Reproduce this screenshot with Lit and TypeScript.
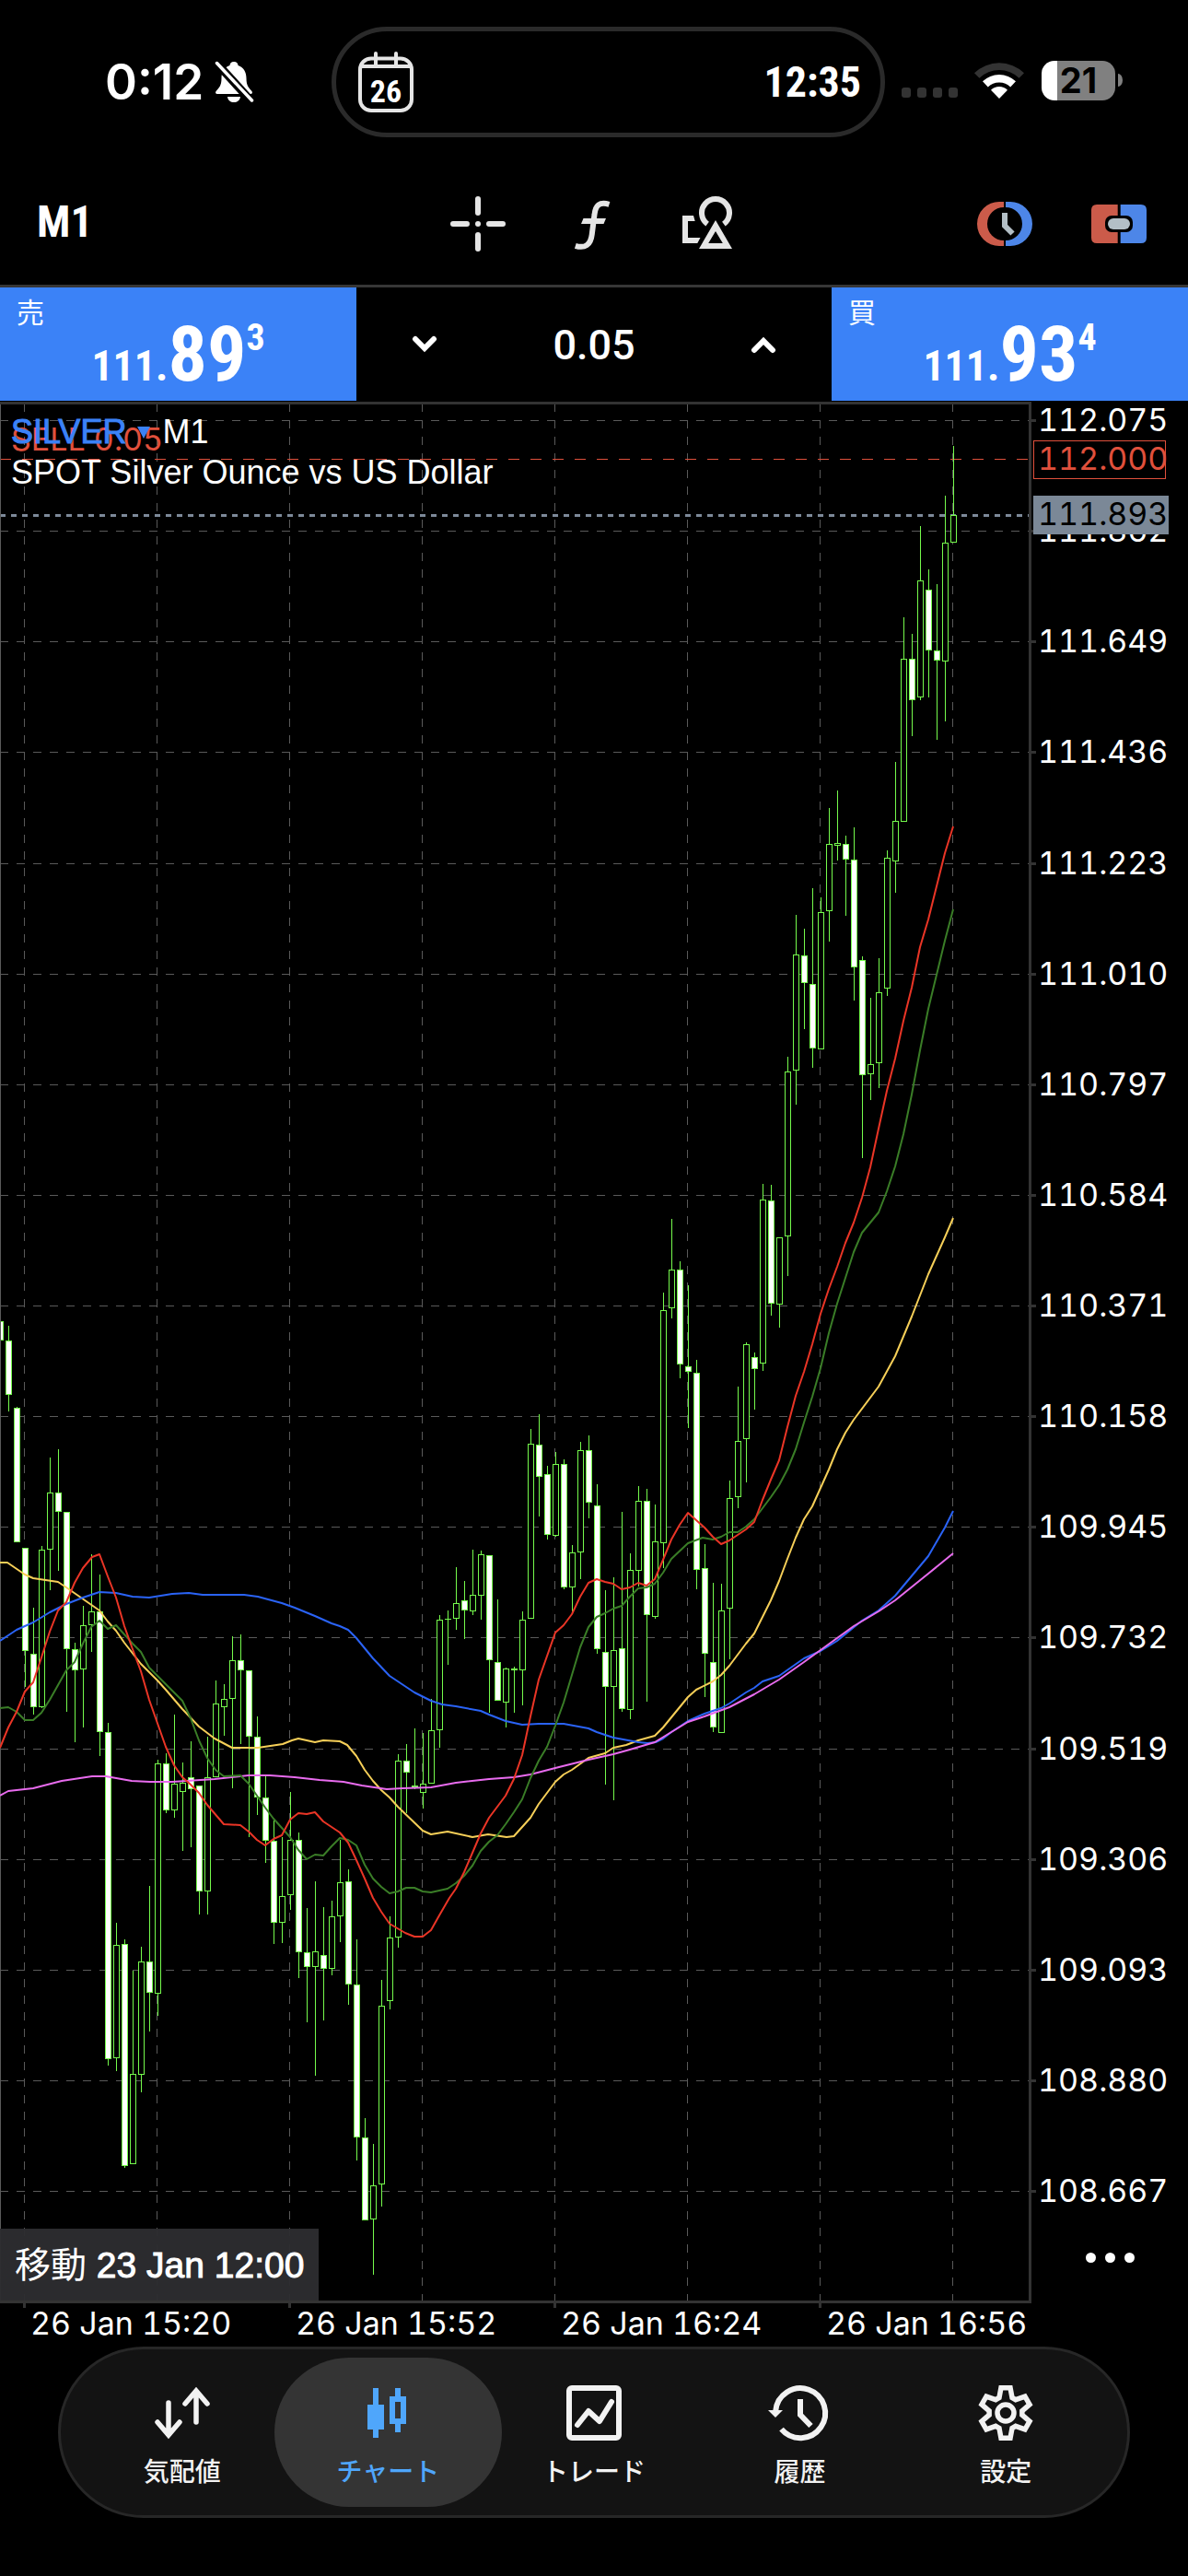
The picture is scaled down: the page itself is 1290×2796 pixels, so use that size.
import { LitElement, html, svg, css } from "lit";
import { customElement, property, state } from "lit/decorators.js";
import { classMap } from "lit/directives/class-map.js";

/* One row per minute: high, body top, body bottom, low, 1 for a falling candle. */
const CANDLES: number[][] = [
  [1434, 1434, 1455, 1455, 1], [1439, 1455, 1514, 1532, 1], [1527, 1528, 1674, 1674, 1], [1680, 1680, 1792, 1831, 1],
  [1745, 1795, 1853, 1861, 1], [1678, 1682, 1853, 1854, 0], [1582, 1620, 1682, 1726, 0], [1573, 1620, 1641, 1705, 1],
  [1641, 1641, 1790, 1858, 1], [1783, 1790, 1813, 1891, 1], [1743, 1764, 1812, 1875, 0], [1687, 1749, 1764, 1793, 0],
  [1709, 1749, 1880, 1906, 1], [1870, 1880, 2235, 2242, 1], [2087, 2111, 2234, 2248, 0], [2105, 2110, 2351, 2353, 1],
  [2139, 2251, 2349, 2349, 0], [2113, 2129, 2252, 2271, 0], [2047, 2129, 2163, 2205, 1], [1910, 1914, 2164, 2188, 0],
  [1903, 1914, 1965, 1968, 1], [1861, 1936, 1965, 1973, 0], [1913, 1935, 1945, 2009, 0], [1890, 1929, 1942, 2005, 1],
  [1938, 1938, 2053, 2078, 1], [1885, 1929, 2053, 2078, 0], [1824, 1849, 1929, 1929, 0], [1828, 1844, 1853, 1884, 0],
  [1776, 1802, 1844, 1941, 0], [1774, 1802, 1813, 1893, 1], [1813, 1813, 1885, 1994, 1], [1863, 1885, 1951, 1970, 1],
  [1928, 1951, 1998, 2022, 1], [1976, 1998, 2087, 2110, 1], [1994, 2058, 2087, 2109, 0], [1945, 1997, 2057, 2073, 0],
  [1989, 1997, 2119, 2147, 1], [2071, 2119, 2135, 2195, 1], [2042, 2118, 2135, 2253, 0], [2070, 2122, 2137, 2193, 1],
  [2063, 2080, 2137, 2144, 0], [1997, 2043, 2080, 2108, 0], [2029, 2042, 2154, 2176, 1], [2105, 2154, 2320, 2345, 1],
  [2299, 2320, 2410, 2410, 1], [2327, 2372, 2409, 2469, 0], [2149, 2177, 2371, 2395, 0], [2080, 2103, 2172, 2181, 0],
  [1904, 1911, 2103, 2114, 0], [1893, 1911, 1924, 1968, 1], [1876, 1938, 1940, 1942, 1], [1881, 1936, 1946, 1963, 0],
  [1844, 1878, 1936, 1936, 0], [1753, 1758, 1878, 1897, 0], [1748, 1757, 1758, 1807, 0], [1701, 1740, 1757, 1769, 0],
  [1716, 1737, 1748, 1779, 1], [1682, 1731, 1749, 1753, 0], [1683, 1687, 1732, 1758, 0], [1688, 1688, 1802, 1859, 1],
  [1736, 1804, 1846, 1846, 1], [1810, 1811, 1848, 1875, 0], [1809, 1811, 1813, 1859, 0], [1749, 1758, 1813, 1851, 0],
  [1551, 1567, 1757, 1757, 0], [1535, 1568, 1603, 1646, 1], [1591, 1600, 1666, 1671, 1], [1576, 1589, 1667, 1668, 0],
  [1584, 1589, 1723, 1725, 1], [1677, 1685, 1723, 1749, 0], [1565, 1574, 1685, 1714, 0], [1558, 1574, 1631, 1648, 1],
  [1611, 1634, 1790, 1795, 1], [1726, 1793, 1831, 1937, 1], [1712, 1791, 1831, 1954, 0], [1641, 1789, 1855, 1858, 1],
  [1686, 1704, 1856, 1866, 0], [1613, 1629, 1705, 1722, 0], [1616, 1629, 1753, 1847, 1], [1633, 1673, 1755, 1757, 0],
  [1403, 1422, 1675, 1702, 0], [1323, 1378, 1420, 1431, 0], [1369, 1378, 1481, 1496, 1], [1395, 1483, 1489, 1550, 1],
  [1476, 1490, 1704, 1725, 1], [1676, 1702, 1795, 1842, 1], [1718, 1804, 1875, 1880, 1], [1719, 1748, 1881, 1881, 0],
  [1607, 1626, 1746, 1801, 0], [1505, 1564, 1625, 1637, 0], [1457, 1459, 1562, 1609, 0], [1468, 1473, 1486, 1530, 1],
  [1285, 1302, 1480, 1488, 0], [1286, 1303, 1415, 1428, 1], [1343, 1343, 1416, 1441, 0], [1147, 1163, 1342, 1385, 0],
  [993, 1036, 1162, 1199, 0], [1008, 1037, 1067, 1117, 1], [964, 1068, 1138, 1159, 1], [974, 990, 1139, 1139, 0],
  [877, 916, 989, 1022, 0], [858, 915, 918, 934, 0], [907, 916, 933, 994, 1], [898, 933, 1050, 1086, 1],
  [1038, 1042, 1167, 1257, 1], [1083, 1155, 1166, 1194, 0], [1040, 1077, 1154, 1181, 0], [923, 931, 1073, 1081, 0],
  [827, 891, 935, 969, 0], [670, 715, 892, 892, 0], [688, 715, 760, 799, 1], [571, 630, 757, 760, 0],
  [618, 640, 706, 757, 1], [634, 706, 717, 803, 1], [538, 589, 718, 783, 0], [484, 559, 589, 589, 0],
];

/* Moving averages, drawn from the slowest colour group to the fastest. */
const AVERAGES: { color: string; points: string }[] = [
  {
    color: "#f6cf58",
    points:
      "0,1696 8,1696 27,1709 36,1713 63,1717 72,1723 108,1748 117,1760 126,1770 135,1783 153,1806 171,1824 180,1834 198,1855 216,1874 233,1887 252,1897 280,1897 307,1893 317,1889 324,1887 342,1891 351,1889 369,1890 377,1894 387,1906 396,1921 405,1933 414,1943 423,1951 432,1961 459,1987 468,1991 486,1988 513,1994 530,1991 550,1994 558,1993 576,1973 585,1958 603,1934 612,1926 621,1921 639,1908 657,1903 666,1897 680,1894 693,1889 711,1884 720,1875 729,1864 747,1842 756,1834 774,1825 783,1818 792,1808 810,1784 819,1773 828,1755 837,1737 846,1716 855,1692 864,1669 873,1649 882,1635 891,1615 900,1595 909,1573 918,1555 927,1541 954,1505 972,1472 990,1429 1008,1383 1026,1343 1035,1322",
  },
  {
    color: "#2a63f6",
    points:
      "0,1781 9,1775 18,1769 36,1761 54,1750 72,1741 90,1734 108,1728 126,1729 144,1733 162,1734 187,1730 205,1729 220,1731 265,1731 280,1733 306,1740 320,1745 342,1754 360,1762 369,1765 378,1769 387,1778 396,1789 405,1800 423,1819 432,1825 450,1837 468,1846 480,1850 495,1852 522,1857 531,1861 549,1868 567,1872 585,1871 612,1871 639,1876 648,1880 666,1886 693,1891 703,1892 712,1891 720,1887 729,1880 747,1868 765,1860 783,1854 792,1849 810,1837 819,1832 828,1825 846,1819 873,1800 882,1796 891,1792 909,1781 936,1759 954,1748 972,1732 1008,1689 1026,1658 1035,1640",
  },
  {
    color: "#e86bee",
    points:
      "0,1949 9,1944 36,1941 67,1933 100,1928 115,1928 143,1933 163,1934 187,1934 233,1931 270,1927 293,1927 320,1929 347,1932 373,1934 393,1938 420,1942 437,1941 468,1940 495,1935 531,1931 558,1929 576,1926 603,1919 639,1910 666,1904 684,1899 711,1891 729,1880 747,1869 765,1863 792,1853 819,1839 846,1823 873,1804 891,1791 927,1765 954,1749 972,1737 1008,1708 1035,1686",
  },
  {
    color: "#3a7d27",
    points:
      "0,1854 9,1853 18,1858 27,1867 36,1867 45,1859 54,1845 63,1829 72,1813 81,1804 90,1784 99,1766 108,1759 117,1768 126,1764 135,1774 144,1784 153,1793 162,1810 171,1819 198,1846 207,1865 216,1889 225,1908 234,1921 243,1928 261,1927 270,1936 279,1949 288,1962 297,1974 306,1984 315,1994 324,2008 333,2018 342,2013 351,2014 360,2004 369,1995 378,1997 387,2003 396,2024 405,2039 414,2048 423,2055 432,2053 441,2049 450,2049 459,2053 468,2054 486,2050 495,2044 504,2036 513,2025 522,2009 531,1999 540,1992 549,1980 558,1967 567,1953 576,1930 585,1911 594,1896 603,1873 612,1848 621,1818 630,1788 639,1766 648,1755 657,1751 666,1746 675,1743 684,1733 693,1724 702,1723 711,1719 720,1707 729,1692 747,1675 763,1669 774,1671 783,1668 792,1663 801,1663 810,1657 819,1649 828,1637 837,1625 846,1612 855,1595 864,1573 873,1544 882,1516 891,1485 900,1447 909,1415 918,1387 927,1359 936,1338 954,1316 963,1293 972,1266 981,1231 990,1188 999,1140 1008,1095 1017,1058 1026,1021 1035,987",
  },
  {
    color: "#ea3526",
    points:
      "0,1897 9,1875 18,1858 27,1836 36,1826 45,1799 54,1771 63,1748 72,1739 81,1718 90,1702 100,1690 108,1687 117,1711 126,1734 135,1765 144,1790 153,1814 162,1845 180,1896 189,1916 198,1929 207,1937 216,1946 225,1959 243,1980 261,1981 270,1988 279,1997 288,2003 297,1996 306,1992 315,1975 324,1968 333,1969 342,1967 351,1977 369,1989 378,2000 387,2019 396,2039 405,2060 414,2075 423,2088 440,2098 450,2102 459,2102 468,2095 477,2079 488,2060 495,2050 504,2032 513,2011 522,1990 531,1973 549,1949 558,1931 567,1905 576,1863 585,1823 603,1772 612,1764 621,1752 630,1733 639,1718 648,1714 657,1717 666,1719 675,1725 684,1723 693,1718 702,1721 711,1714 720,1693 729,1671 738,1655 747,1642 756,1650 765,1658 774,1668 783,1676 792,1672 810,1660 819,1652 828,1628 837,1606 846,1585 855,1549 864,1515 873,1489 882,1459 891,1426 900,1399 909,1375 918,1349 927,1327 936,1300 945,1267 954,1225 963,1184 972,1149 981,1108 990,1072 999,1028 1008,998 1017,962 1026,926 1035,897",
  },
];

const PRICES = Array.from({ length: 17 }, (_, k) => ({
  label: (112.075 - 0.213 * k).toFixed(3),
  y: 456 + Math.round(120.125 * k),
}));
const COLUMNS = Array.from({ length: 8 }, (_, k) => 26 + 144 * k);
const TIMES = ["26 Jan 15:20", "26 Jan 15:52", "26 Jan 16:24", "26 Jan 16:56"];

const gearPath = (): string => {
  const pts: string[] = [];
  for (let t = 0; t < 6; t++) {
    for (const [r, d] of [[18, -23], [27.6, -10.5], [27.6, 10.5], [18, 23]]) {
      const a = ((t * 60 + d - 90) * Math.PI) / 180;
      pts.push(`${(30 + r * Math.cos(a)).toFixed(2)} ${(30 + r * Math.sin(a)).toFixed(2)}`);
    }
  }
  return `M${pts.join("L")}Z`;
};

@customElement("status-bar")
class StatusBar extends LitElement {
  static styles = css`
    :host { display: grid; grid-template-columns: 360fr 601px 329fr; padding-top: 29px; height: 149px; color: #fff; }
    svg { display: block; overflow: visible; }
    .left { display: flex; align-items: center; gap: 12px; padding-left: 114px; height: 120px; }
    .time { font: 600 53px/60px Inter, sans-serif; }
    .island {
      display: flex; align-items: center; justify-content: space-between; box-sizing: border-box; height: 120px;
      padding: 0 21px 0 24px; border: 5px solid #2a2a2a; border-radius: 60px;
    }
    .timer { font: 700 46px/60px "Liberation Sans Narrow", "Roboto Condensed", "DejaVu Sans Condensed", sans-serif; }
    .day { font: 700 34px "Liberation Sans Narrow", "Roboto Condensed", "DejaVu Sans Condensed", sans-serif; }
    .right { display: flex; align-items: center; padding-left: 18px; height: 116px; }
    .dots { display: flex; gap: 7px; padding-top: 27px; }
    .dot { width: 10px; height: 11px; border-radius: 3px; background: #333; }
    .wifi { margin-left: 18px; }
    .battery {
      display: flex; align-items: center; justify-content: center; box-sizing: border-box; margin-left: 19px; width: 80px; height: 43px;
      border-radius: 14px; background: linear-gradient(90deg, #fff 17px, #808080 17px); color: #000;
      font: 700 38px/43px Inter, sans-serif;
    }
    .cap { width: 5px; height: 14px; margin-left: 3px; border-radius: 0 5px 5px 0 / 0 7px 7px 0; background: #808080; }
  `;

  render() {
    return html`
      <div class="left">
        <span class="time">0:12</span>
        <svg width="42" height="44" viewBox="0 0 42 44" aria-hidden="true">
          <path fill="#fff" d="M21 0C24 0 25.5 2 25.5 4C32 6 34.500 12 34.500 18C34.500 26 37 28 40 31.500C42 34 40.500 35 38 35H4C1.500 35 0 34 2 31.500C5 28 7.500 26 7.500 18C7.500 12 10 6 16.500 4C16.500 2 18 0 21 0ZM14 38H28C27.500 42 24.500 44 21 44S14.500 42 14 38Z" />
          <path stroke="#000" stroke-width="9" d="M1 0L40 43" />
          <path stroke="#fff" stroke-width="3.500" stroke-linecap="round" d="M2.500 1.500L40.500 42" />
        </svg>
      </div>
      <div class="island">
        <svg width="60" height="66" viewBox="0 0 60 66" aria-hidden="true">
          <g fill="none" stroke="#e5e5e5" stroke-width="4">
            <rect x="2" y="7.500" width="56" height="56.500" rx="12" />
            <path d="M3 16H57" />
            <path stroke-linecap="round" d="M19 2V14M41 2V14" />
          </g>
          <text class="day" x="30" y="55" text-anchor="middle" fill="#fff">26</text>
        </svg>
        <span class="timer">12:35</span>
      </div>
      <div class="right">
        <div class="dots"><i class="dot"></i><i class="dot"></i><i class="dot"></i><i class="dot"></i></div>
        <svg class="wifi" width="54" height="40" viewBox="0 0 54 40" role="img" aria-label="Wi-Fi">
          <path fill="#333" d="M0 12.200A39 39 0 0 1 54 12.200L48.500 17.700A31 31 0 0 0 5.500 17.700Z" />
          <path fill="#fff" d="M9 21.300A26 26 0 0 1 45 21.300L39.200 27.400A17.500 17.500 0 0 0 14.800 27.400Z" />
          <path fill="#fff" d="M18 30.700A13 13 0 0 1 36 30.700L27 40Z" />
        </svg>
        <span class="battery">21</span><span class="cap"></span>
      </div>
    `;
  }
}

@customElement("chart-toolbar")
class ChartToolbar extends LitElement {
  static styles = css`
    :host {
      display: grid; grid-template-columns: 1fr auto 1fr; align-items: center; height: 130px; padding: 0 45px 1px 40px;
      border-bottom: 3px solid #363636;
    }
    button { display: block; margin: 0; padding: 0; border: 0; background: none; color: #e5e5e5; cursor: pointer; }
    svg { display: block; overflow: visible; }
    .frame { justify-self: start; padding-bottom: 4px; color: #fff; font: 700 48px/60px "Liberation Sans Narrow", "Roboto Condensed", "DejaVu Sans Condensed", sans-serif; }
    .group { display: flex; gap: 64px; }
    .end { justify-self: end; }
  `;

  render() {
    return html`
      <button class="frame">M1</button>
      <div class="group">
        <button aria-label="Crosshair">
          <svg width="60" height="60" viewBox="0 0 60 60" stroke="currentColor" stroke-width="6" stroke-linecap="round">
            <path d="M30 3V18M30 42V57M3 30H18M42 30H57M30 30H30.010" />
          </svg>
        </button>
        <button aria-label="Indicators">
          <svg width="60" height="60" viewBox="0 0 60 60" fill="none">
            <path stroke="currentColor" stroke-width="6" d="M48.500 8.800C38 5.500 33.500 10 32.500 20L29.800 41C28.500 53 22 57 11.800 53.800" />
            <path fill="currentColor" d="M20.500 24H45L42.500 30H18Z" />
          </svg>
        </button>
        <button aria-label="Objects">
          <svg width="60" height="60" viewBox="0 0 60 60" fill="none">
            <path stroke="currentColor" stroke-width="6" d="M31.100 30.100A15 15 0 1 1 48.900 30.100" />
            <path fill="currentColor" fill-rule="evenodd" d="M40 26L58 57H22ZM40 38L32.200 51H47.800Z" />
            <path fill="currentColor" d="M4 21H16L17.700 27H10V45H23.500L20.300 51H4Z" />
          </svg>
        </button>
      </div>
      <div class="group end">
        <button aria-label="Pending order">
          <svg width="60" height="60" viewBox="0 0 60 60" fill="none">
            <path fill="#cb5b4a" d="M29 6H24A24 24 0 0 0 24 54H29V48A18 18 0 0 1 29 12Z" />
            <path fill="#4d86e8" d="M31 6H36A24 24 0 0 1 36 54H31V48A18 18 0 0 0 31 12Z" />
            <path stroke="#b3bfc6" stroke-width="6" d="M30 18V32L38.500 40.500" />
          </svg>
        </button>
        <button aria-label="Market order">
          <svg width="60" height="60" viewBox="0 0 60 60">
            <path fill="#cb5b4a" d="M6 9H28.700V51H6Q0 51 0 45V15Q0 9 6 9Z" />
            <path fill="#4d86e8" d="M31.700 9H54Q60 9 60 15V45Q60 51 54 51H31.700Z" />
            <rect x="15" y="21" width="30" height="18" rx="7" />
            <rect x="18" y="24" width="24" height="12" rx="6" fill="#b3bfc6" />
          </svg>
        </button>
      </div>
    `;
  }
}

@customElement("trade-panel")
class TradePanel extends LitElement {
  @state() private lot = 0.05;

  static styles = css`
    :host { display: grid; grid-template-columns: 3fr 4fr 3fr; height: 123px; margin-bottom: 1px; }
    button { margin: 0; padding: 0; border: 0; background: none; color: #fff; cursor: pointer; }
    .deal { display: flex; flex-direction: column; background: #3b82f7; }
    .side { align-self: flex-start; padding: 10px 18px 0; font: 400 30px/30px "Noto Sans CJK JP", sans-serif; }
    .price {
      align-self: center; font: 700 46px/66px "Liberation Sans Narrow", "Roboto Condensed", "DejaVu Sans Condensed", sans-serif;
      white-space: nowrap;
    }
    .big { font-size: 84px; }
    .tick { font-size: 40px; vertical-align: 33px; line-height: 30px; }
    .lot { display: grid; grid-template-columns: 148px 1fr 148px; align-items: stretch; }
    .step { display: grid; place-items: center; }
    input {
      width: 100%; min-width: 0; box-sizing: border-box; border: 0; padding: 3px 0 0; background: none; color: #fff; text-align: center;
      font: 500 45px/60px Roboto, sans-serif; outline: none;
    }
  `;

  private step(by: number) {
    this.lot = Math.max(0.01, Math.round((this.lot + by) * 100) / 100);
  }

  private deal(side: string, base: string, big: string, tick: string) {
    return html`<button class="deal">
      <span class="side">${side}</span>
      <span class="price">${base}<span class="big">${big}</span><span class="tick">${tick}</span></span>
    </button>`;
  }

  render() {
    return html`
      ${this.deal("売", "111.", "89", "3")}
      <div class="lot">
        <button class="step" aria-label="Decrease volume" @click=${() => this.step(-0.01)}>
          <svg width="28" height="20" viewBox="0 0 28 20" fill="none" stroke="#fff" stroke-width="6" stroke-linecap="round"><path d="M4 4L14 14L24 4" /></svg>
        </button>
        <input aria-label="Volume" inputmode="decimal" .value=${this.lot.toFixed(2)} />
        <button class="step" aria-label="Increase volume" @click=${() => this.step(0.01)}>
          <svg width="28" height="20" viewBox="0 0 28 20" fill="none" stroke="#fff" stroke-width="6" stroke-linecap="round"><path d="M4 16L14 6L24 16" /></svg>
        </button>
      </div>
      ${this.deal("買", "111.", "93", "4")}
    `;
  }
}

@customElement("price-chart")
class PriceChart extends LitElement {
  static styles = css`
    :host { display: block; position: relative; }
    .plot { display: block; width: 100%; height: auto; }
    .crisp { shape-rendering: crispEdges; }
    .axis { font: 400 34px Inter, sans-serif; font-variant-numeric: tabular-nums; fill: #fff; }
    .grid { stroke: #5a5a5a; stroke-width: 1; }
    .frame { stroke: #333; stroke-width: 3; fill: none; }
    .order { stroke: #e0503c; fill: none; }
    .axis.ordertext { fill: #e0503c; }
    .bid { stroke: #7d8999; stroke-width: 3; stroke-dasharray: 6 6; }
    .bidbox { fill: #7b8897; }
    .axis.bidtext { fill: #000; }
    .up { stroke: #75fb4c; fill: #000; }
    .down { stroke: #75fb4c; fill: #fff; }
    .average { fill: none; stroke-width: 2; stroke-linejoin: round; }
    button { margin: 0; padding: 0; border: 0; background: none; color: inherit; font: inherit; cursor: pointer; }
    .head { position: absolute; top: 11px; left: 12px; color: #fff; font: 400 36px/44px "Liberation Sans", sans-serif; }
    .title { display: flex; align-items: center; gap: 13px; }
    .symbol { display: flex; align-items: center; gap: 12px; color: #3b82f7; -webkit-text-stroke: 1px #3b82f7; }
    .goto {
      position: absolute; left: 0; bottom: 49px; height: 78px; padding: 2px 16px 0; background: rgba(44, 44, 48, 0.97); color: #fff;
      font: 400 39px/76px "Liberation Sans", "Noto Sans CJK JP", sans-serif; -webkit-text-stroke: 1px #fff;
    }
    .jp { -webkit-text-stroke: 0; }
    .more { position: absolute; right: 48px; bottom: 80px; display: flex; gap: 10px; padding: 10px; }
    .more i { width: 11px; height: 11px; border-radius: 50%; background: #fff; }
  `;

  private candle(row: number[], i: number) {
    const [high, top, bottom, low, falling] = row;
    const x = 9 * i + 0.5;
    const wicks = `M${x} ${high}V${top}M${x} ${bottom}V${low}`;
    const body = bottom - top < 3
      ? svg`<rect x=${x - 3.5} y=${top} width="7" height=${bottom - top} stroke="none" fill="#75fb4c" />`
      : svg`<rect x=${x - 3} y=${top + 0.5} width="6" height=${bottom - top - 1} />`;
    return svg`<g class=${falling ? "down" : "up"}><path d=${wicks} />${body}</g>`;
  }

  render() {
    return html`
      <svg class="plot" viewBox="0 436 1290 2110" role="img" aria-label="SILVER M1">
        <g class="crisp">
          <g class="grid">
            ${PRICES.map((p) => svg`<path stroke-dasharray="9 9" d="M0 ${p.y + 0.5}H1117" />`)}
            ${COLUMNS.map((x) => svg`<path stroke-dasharray="9 9" d="M${x + 0.5} 438V2497" />`)}
          </g>
          <path class="order" stroke-dasharray="12 12" d="M0 498.500H1117" />
          <path class="bid" d="M0 559.500H1117" />
          ${CANDLES.map((row, i) => this.candle(row, i))}
          <path class="grid" d="M0.500 439V2497" />
          <path class="frame" d="M0 437.500H1118.500V2498.500H0" />
          ${PRICES.map((p) => svg`<path class="frame" d="M1120 ${p.y + 0.5}H1125" />`)}
          ${TIMES.map((_, k) => svg`<path class="frame" d="M${26.5 + 288 * k} 2500V2505" />`)}
        </g>
        ${AVERAGES.map((a) => svg`<polyline class="average" stroke=${a.color} points=${a.points} />`)}
        ${PRICES.map((p) => svg`<text class="axis" x="1127" y=${p.y + 12}>${p.label}</text>`)}
        ${TIMES.map((t, k) => svg`<text class="axis" x=${33 + 288 * k} y="2534">${t}</text>`)}
        <rect class="order crisp" x="1122.500" y="478.500" width="143" height="41" />
        <text class="axis ordertext" x="1127" y="510">112.000</text>
        <rect class="bidbox" x="1122" y="538" width="147" height="42" />
        <text class="axis bidtext" x="1127" y="570">111.893</text>
        <text class="axis ordertext" x="12" y="489">SELL 0.05</text>
      </svg>
      <div class="head">
        <div class="title">
          <button class="symbol">SILVER<svg width="14" height="14" viewBox="0 0 14 14"><path fill="#3b82f7" d="M0 1H14L7 14Z" /></svg></button>
          <span>M1</span>
        </div>
        <div>SPOT Silver Ounce vs US Dollar</div>
      </div>
      <button class="goto"><span class="jp">移動</span> 23 Jan 12:00</button>
      <button class="more" aria-label="More"><i></i><i></i><i></i></button>
    `;
  }
}

@customElement("tab-bar")
class TabBar extends LitElement {
  @property() active = "chart";

  static styles = css`
    :host { display: block; padding: 1px 63px 63px; }
    nav {
      display: grid; grid-template-columns: repeat(5, 1fr); box-sizing: border-box; padding: 9px 20px; border: 3px solid #272727;
      border-radius: 93px; background: #131313;
    }
    button {
      display: flex; flex-direction: column; align-items: center; gap: 14px; height: 162px; margin: 0 -12px; padding: 30px 0 0;
      border: 0; border-radius: 81px; background: none; color: #f2f2f2; cursor: pointer;
      font: 500 28px/36px "Noto Sans CJK JP", sans-serif;
    }
    .active { background: #343434; color: #4fa6fb; }
    svg { display: block; overflow: visible; }
  `;

  private tabs = [
    {
      id: "quotes", label: "気配値",
      icon: svg`<path fill="none" stroke="currentColor" stroke-width="5.500" stroke-linecap="round" d="M15 19V53M3 40L15 54L27 40M45 40V7M33 20L45 6L57 20" />`,
    },
    {
      id: "chart", label: "チャート",
      icon: svg`<path fill="currentColor" fill-rule="evenodd" d="M14 3H20V21H26V48H20V57H14V48H8V21H14ZM38 3H44V12H50V42H44V51H38V42H32V12H38ZM38 18V36H44V18Z" />`,
    },
    {
      id: "trade", label: "トレード",
      icon: svg`<g fill="none" stroke="currentColor" stroke-width="6"><rect x="3" y="3" width="54" height="54" rx="3" /><path stroke-linecap="round" stroke-linejoin="round" d="M12 43L24 28L36 39L49 18" /></g>`,
    },
    {
      id: "history", label: "履歴",
      icon: svg`<path fill="none" stroke="currentColor" stroke-width="6" d="M3.200 28A27 27 0 1 1 9.500 47.600M30 15V32L41.500 44" /><path fill="currentColor" d="M-5 27H11L3 35Z" />`,
    },
    {
      id: "settings", label: "設定",
      icon: svg`<g fill="none" stroke="currentColor" stroke-width="5.500"><path d=${gearPath()} /><circle cx="30" cy="30" r="9" /></g>`,
    },
  ];

  render() {
    return html`<nav>
      ${this.tabs.map((tab) => html`
        <button class=${classMap({ active: tab.id === this.active })} @click=${() => (this.active = tab.id)}>
          <svg width="60" height="60" viewBox="0 0 60 60" aria-hidden="true">${tab.icon}</svg>
          <span>${tab.label}</span>
        </button>
      `)}
    </nav>`;
  }
}

@customElement("app-root")
class AppRoot extends LitElement {
  static styles = css`
    :host { display: flex; flex-direction: column; min-height: 100vh; background: #000; color: #fff; font-family: Inter, sans-serif; }
  `;

  render() {
    return html`
      <status-bar></status-bar>
      <chart-toolbar></chart-toolbar>
      <trade-panel></trade-panel>
      <price-chart></price-chart>
      <tab-bar></tab-bar>
    `;
  }
}
